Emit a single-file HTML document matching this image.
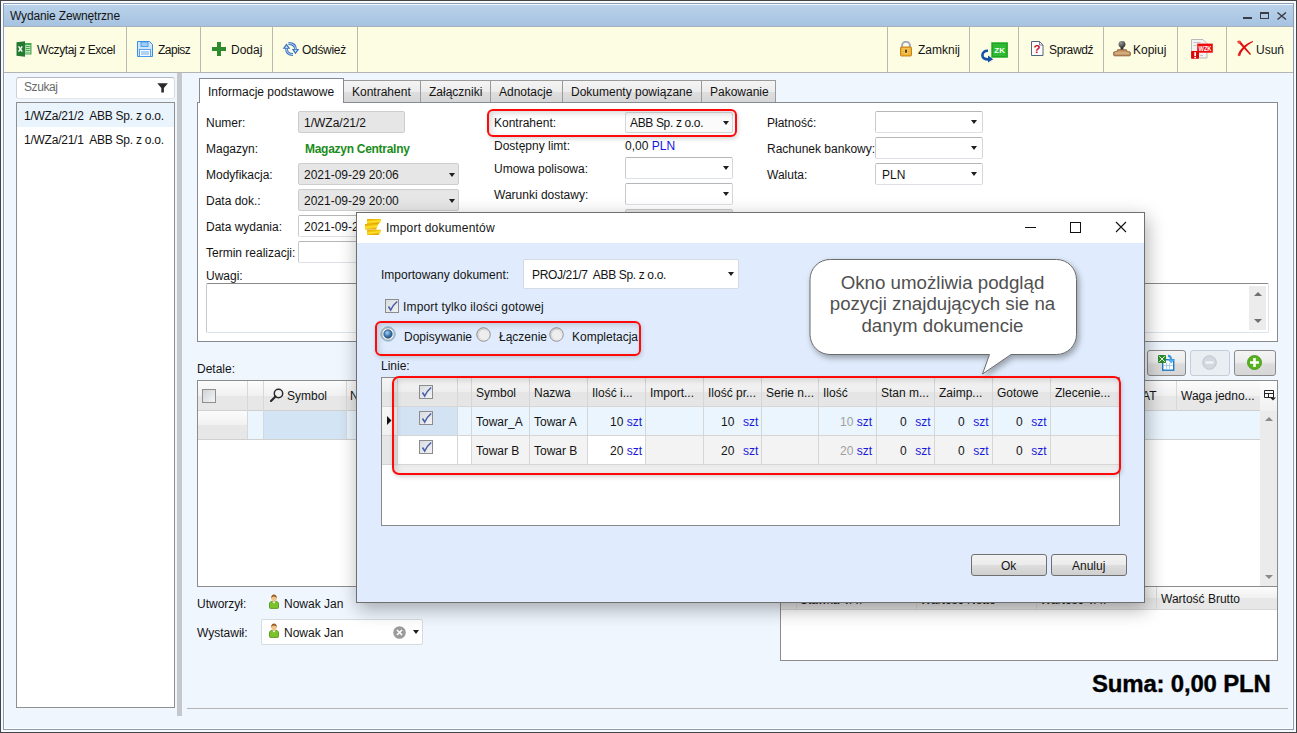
<!DOCTYPE html>
<html><head><meta charset="utf-8">
<style>
*{box-sizing:border-box;margin:0;padding:0}
html,body{width:1297px;height:733px;overflow:hidden;background:#fff}
body{position:relative;font-family:"Liberation Sans",sans-serif;font-size:12px;color:#141414}
.a{position:absolute}
.t{position:absolute;white-space:nowrap;line-height:16px;font-size:12px}
.box{position:absolute;border:1px solid;border-color:#b4b6ba #d4d6d9 #dde0e4 #c8cacd;border-radius:2px;background:#fff}
.gbox{position:absolute;border:1px solid #cdcdcd;border-radius:2px;background:#e6e6e6}
.dd{position:absolute;width:0;height:0;border-left:3.5px solid transparent;border-right:3.5px solid transparent;border-top:4px solid #1e1e1e}
.sep{position:absolute;top:27px;width:1px;height:45px;background:#b9b9b0}
</style></head><body>
<!-- window frame -->
<div class="a" style="left:0;top:0;width:1297px;height:733px;border:1px solid #454545;background:#f6f9fd"></div>
<div class="a" style="left:3px;top:3px;width:1291px;height:727px;border:1px solid #8b9cb4;background:#eff6fe;box-shadow:inset 1px 1px 0 #fbfdff,inset -1px -1px 0 #fbfdff"></div>
<!-- title bar -->
<div class="a" style="left:4px;top:4px;width:1289px;height:1px;background:#f4f8fd"></div>
<div class="a" style="left:4px;top:5px;width:1289px;height:21px;background:linear-gradient(#bad2ea,#a5c3e1)"></div>
<div class="t" style="left:10px;top:8px;letter-spacing:-0.15px">Wydanie Zewnętrzne</div>
<!-- window controls -->
<div class="a" style="left:1243px;top:17px;width:9px;height:2px;background:#3c3c46"></div>
<div class="a" style="left:1260px;top:12px;width:9px;height:7px;border:1px solid #3c3c46;border-top-width:2px"></div>
<svg class="a" style="left:1277px;top:12px" width="10" height="8" viewBox="0 0 10 8"><path d="M0.5 0.5L9 7.5M9 0.5L0.5 7.5" stroke="#3c3c46" stroke-width="1.4"/></svg>
<!-- toolbar -->
<div class="a" style="left:4px;top:26px;width:1289px;height:1px;background:#a9b1ba"></div>
<div class="a" style="left:4px;top:27px;width:1289px;height:45px;background:#fdfde3"></div>
<div class="a" style="left:4px;top:72px;width:1289px;height:1px;background:#b4b4b4"></div>
<div class="a" style="left:4px;top:27px;width:1px;height:45px;background:#f8fbff"></div>
<div class="sep" style="left:126px"></div>
<div class="sep" style="left:200px"></div>
<div class="sep" style="left:272px"></div>
<div class="sep" style="left:357px"></div>
<div class="sep" style="left:887px"></div>
<div class="sep" style="left:969px"></div>
<div class="sep" style="left:1018px"></div>
<div class="sep" style="left:1103px"></div>
<div class="sep" style="left:1177px"></div>
<div class="sep" style="left:1226px"></div>
<!-- toolbar icons/text -->
<svg class="a" style="left:16px;top:41px" width="16" height="16" viewBox="0 0 16 16"><rect x="8" y="2" width="7.5" height="11.5" fill="#48a84e"/><path d="M9.5 4.5h4.5M9.5 6.5h4.5M9.5 8.5h4.5M9.5 10.5h4.5M9.5 12h4.5" stroke="#cfe9cf" stroke-width="0.9"/><path d="M9.5 4v8.5M14 4v8.5" stroke="#bfe0bf" stroke-width="0.6"/><path d="M0.5 1.2L9 0.3v15.4L0.5 14.8z" fill="#237a30"/><path d="M2.6 5.3l3.6 5.4M6.2 5.3l-3.6 5.4" stroke="#fff" stroke-width="1.5"/></svg>
<div class="t" style="left:37px;top:42px;letter-spacing:-0.4px">Wczytaj z Excel</div>
<svg class="a" style="left:137px;top:41px" width="16" height="16" viewBox="0 0 16 16"><path d="M0.5 0.5h12l3 3v12h-15z" fill="#cfe6fb" stroke="#3a8ee6"/><rect x="4" y="1" width="7" height="4.5" fill="#9fcdf5" stroke="#3a8ee6" stroke-width="0.8"/><rect x="2.5" y="8.5" width="11" height="7" fill="#f4f9ff" stroke="#3a8ee6" stroke-width="0.8"/><path d="M4 11h8M4 13h8" stroke="#6aaef0"/></svg>
<div class="t" style="left:158px;top:42px;letter-spacing:-0.5px">Zapisz</div>
<svg class="a" style="left:212px;top:42px" width="14" height="14" viewBox="0 0 14 14"><path d="M5 0h4v5h5v4h-5v5h-4v-5h-5v-4h5z" fill="#2e8b2e"/></svg>
<div class="t" style="left:231px;top:42px">Dodaj</div>
<svg class="a" style="left:281px;top:41px" width="19" height="16" viewBox="0 0 19 16"><path d="M5.5 7.5Q5.5 13.5 12 13.5" fill="none" stroke="#3d6fc0" stroke-width="2.8"/><path d="M5.5 7.5Q5.5 13.5 12 13.5" fill="none" stroke="#b8dcf8" stroke-width="1"/><path d="M5.5 2.5L9.3 7.8H1.7z" fill="#3d6fc0"/><path d="M5.5 4.5L7 7H4z" fill="#c8e6fb"/><path d="M7.5 2.5Q14.5 2.5 14.5 8.5" fill="none" stroke="#3d6fc0" stroke-width="2.8"/><path d="M7.5 2.5Q14.5 2.5 14.5 8.5" fill="none" stroke="#b8dcf8" stroke-width="1"/><path d="M14.5 13.3L18.3 8H10.7z" fill="#3d6fc0"/><path d="M14.5 11.3L16 8.8H13z" fill="#c8e6fb"/></svg>
<div class="t" style="left:302px;top:42px;letter-spacing:-0.3px">Odśwież</div>
<svg class="a" style="left:900px;top:41px" width="12" height="16" viewBox="0 0 12 16"><path d="M2 6.5V4.8a4 4 0 0 1 8 0v1.7" fill="none" stroke="#a4acba" stroke-width="2.1"/><rect x="0.5" y="6" width="11" height="9" rx="1" fill="#eeac2c" stroke="#c27a12" stroke-width="0.9"/><rect x="1.8" y="7.3" width="8.4" height="6" fill="#f8d060"/><path d="M2 8.8h2.6M7.4 8.8h2.6M2 10.6h2.6M7.4 10.6h2.6M2 12.3h2.6M7.4 12.3h2.6" stroke="#dc9a20" stroke-width="0.7"/><rect x="5.1" y="8.6" width="1.8" height="3.2" fill="#4a3008"/></svg>
<div class="t" style="left:918px;top:42px">Zamknij</div>
<svg class="a" style="left:980px;top:41px" width="30" height="22" viewBox="0 0 30 22"><rect x="11.2" y="1.2" width="16.8" height="15.6" fill="#2fba33"/><rect x="12.5" y="2.5" width="14.2" height="13" fill="none" stroke="#27a02a" stroke-width="1"/><text x="19.6" y="11.9" font-family="Liberation Sans" font-weight="bold" font-size="8" fill="#f4fff4" text-anchor="middle">ZK</text><path d="M8 9.8C4.5 9.6 2.4 11.5 2.4 14.2C2.4 17 4.8 18.6 8.6 18.4" fill="none" stroke="#1450a8" stroke-width="2.6"/><path d="M8 14.6L13.2 18.2L8 21.4z" fill="#1450a8"/></svg>
<svg class="a" style="left:1031px;top:41px" width="13" height="15" viewBox="0 0 13 15"><path d="M0.5 0.5h8l3.5 3.5v10.5h-11.5z" fill="#fff" stroke="#54647e"/><path d="M8.5 0.5v3.5h3.5" fill="none" stroke="#54647e" stroke-width="0.8"/><text x="6" y="11.5" font-family="Liberation Sans" font-weight="bold" font-size="11.5" fill="#c8101c" text-anchor="middle">?</text></svg>
<div class="t" style="left:1049px;top:42px;letter-spacing:-0.35px">Sprawdź</div>
<svg class="a" style="left:1113px;top:40px" width="18" height="17" viewBox="0 0 18 17"><defs><radialGradient id="bh" cx="0.35" cy="0.3" r="0.8"><stop offset="0" stop-color="#9a9a9a"/><stop offset="1" stop-color="#2a2a2a"/></radialGradient></defs><rect x="7.6" y="5.5" width="2.8" height="5" fill="#333"/><circle cx="9" cy="4.3" r="3.4" fill="url(#bh)"/><path d="M4.5 9.8h9l0.6 2h2.4a0.8 0.8 0 0 1 0.8 0.8v2.4a0.8 0.8 0 0 1-0.8 0.8h-15a0.8 0.8 0 0 1-0.8-0.8v-2.4a0.8 0.8 0 0 1 0.8-0.8h2.4z" fill="#c89868" stroke="#86592e" stroke-width="0.9"/><path d="M2 13h14" stroke="#e2bf94" stroke-width="1"/></svg>
<div class="t" style="left:1133px;top:42px">Kopiuj</div>
<svg class="a" style="left:1190px;top:38px" width="24" height="22" viewBox="0 0 24 22"><path d="M1.5 1.5h11.5l4 4v14.5h-15.5z" fill="#f2f2f2" stroke="#b8b8b8"/><path d="M3.5 4.5h7M3.5 7.5h3M10 17.5h3" stroke="#c4c4c4" stroke-width="1.2"/><rect x="7.2" y="5.6" width="15.6" height="9.1" fill="#ee0a0a"/><text x="15" y="13" font-family="Liberation Sans" font-weight="bold" font-size="7" fill="#fff" text-anchor="middle" textLength="13" lengthAdjust="spacingAndGlyphs">WZK</text><rect x="1.1" y="12.9" width="7.9" height="7.8" rx="0.8" fill="#d80808"/><rect x="4.3" y="14.2" width="1.7" height="3.9" fill="#fff"/><rect x="4.3" y="18.9" width="1.7" height="1.3" fill="#fff"/></svg>
<svg class="a" style="left:1237px;top:40px" width="17" height="17" viewBox="0 0 17 17"><path d="M0.2 1.2L3 0.8L14 14L13 15z" fill="#e01010"/><path d="M16.2 0.8L15.6 2.2C12 4 9 6.5 6.5 9.5C4.5 12 3.4 14 3.2 15.6L0.8 15.2C1.5 12.5 3 10 5.5 7.5C8.5 4.5 12 2 16.2 0.8z" fill="#e01010"/><circle cx="2" cy="2" r="1.6" fill="#f04848"/><circle cx="2.1" cy="14.8" r="1.4" fill="#e83030"/></svg>
<div class="t" style="left:1256px;top:42px">Usuń</div>

<!-- left panel -->
<div class="box" style="left:16px;top:77px;width:159px;height:22px;border-color:#b4bac2 #d8dde2 #e2e6ea #ccd1d6;border-radius:3px"></div>
<div class="t" style="left:24px;top:79px;color:#6a6a6a;letter-spacing:-0.4px">Szukaj</div>
<svg class="a" style="left:157px;top:83px" width="12" height="10" viewBox="0 0 12 10"><path d="M0.3 0.3h10.6l-4 4.6v4.6h-2.6v-4.6z" fill="#2a2a2a"/></svg>
<div class="a" style="left:16px;top:102px;width:159px;height:606px;border:1px solid #8f8f8f;background:#fff"></div>
<div class="a" style="left:17px;top:103px;width:157px;height:24px;background:#eaf4fd"></div>
<div class="t" style="left:24px;top:108px;letter-spacing:-0.24px">1/WZa/21/2&nbsp; ABB Sp. z o.o.</div>
<div class="t" style="left:24px;top:132px;letter-spacing:-0.24px">1/WZa/21/1&nbsp; ABB Sp. z o.o.</div>
<div class="a" style="left:177px;top:73px;width:5px;height:643px;background:#c4c7cb"></div>
<div class="a" style="left:187px;top:708px;width:1101px;height:1px;background:#b4b4b4"></div>


<!-- tabs -->
<div class="a" style="left:343px;top:80px;width:78px;height:22px;border:1px solid #9a9a9a;border-bottom:none;background:linear-gradient(#f4f4f4 0%,#ececec 50%,#dedede 54%,#d6d6d6 100%)"></div>
<div class="a" style="left:420px;top:80px;width:71px;height:22px;border:1px solid #9a9a9a;border-bottom:none;background:linear-gradient(#f4f4f4 0%,#ececec 50%,#dedede 54%,#d6d6d6 100%)"></div>
<div class="a" style="left:490px;top:80px;width:73px;height:22px;border:1px solid #9a9a9a;border-bottom:none;background:linear-gradient(#f4f4f4 0%,#ececec 50%,#dedede 54%,#d6d6d6 100%)"></div>
<div class="a" style="left:562px;top:80px;width:140px;height:22px;border:1px solid #9a9a9a;border-bottom:none;background:linear-gradient(#f4f4f4 0%,#ececec 50%,#dedede 54%,#d6d6d6 100%)"></div>
<div class="a" style="left:701px;top:80px;width:75px;height:22px;border:1px solid #9a9a9a;border-bottom:none;background:linear-gradient(#f4f4f4 0%,#ececec 50%,#dedede 54%,#d6d6d6 100%)"></div>
<div class="t" style="left:352px;top:84px">Kontrahent</div>
<div class="t" style="left:429px;top:84px">Załączniki</div>
<div class="t" style="left:499px;top:84px">Adnotacje</div>
<div class="t" style="left:571px;top:84px">Dokumenty powiązane</div>
<div class="t" style="left:710px;top:84px">Pakowanie</div>
<!-- content panel -->
<div class="a" style="left:197px;top:102px;width:1081px;height:240px;border:1px solid #858a94;background:#fff"></div>
<div class="a" style="left:199px;top:78px;width:145px;height:25px;border:1px solid #858a94;border-bottom:none;background:#fff"></div>
<div class="t" style="left:208px;top:84px">Informacje podstawowe</div>
<!-- form col 1 -->
<div class="t" style="left:206px;top:115px">Numer:</div>
<div class="t" style="left:206px;top:141px">Magazyn:</div>
<div class="t" style="left:206px;top:167px">Modyfikacja:</div>
<div class="t" style="left:206px;top:193px">Data dok.:</div>
<div class="t" style="left:206px;top:219px">Data wydania:</div>
<div class="t" style="left:206px;top:245px">Termin realizacji:</div>
<div class="t" style="left:206px;top:268px">Uwagi:</div>
<div class="gbox" style="left:298px;top:111px;width:107px;height:22px"></div>
<div class="t" style="left:304px;top:115px">1/WZa/21/2</div>
<div class="t" style="left:305px;top:141px;color:#1a8c1a;font-weight:bold;letter-spacing:-0.28px">Magazyn Centralny</div>
<div class="gbox" style="left:298px;top:163px;width:161px;height:22px"></div>
<div class="t" style="left:304px;top:167px">2021-09-29 20:06</div>
<div class="dd" style="left:449px;top:173px"></div>
<div class="gbox" style="left:298px;top:189px;width:161px;height:22px"></div>
<div class="t" style="left:304px;top:193px">2021-09-29 20:00</div>
<div class="dd" style="left:449px;top:199px"></div>
<div class="box" style="left:298px;top:215px;width:161px;height:22px"></div>
<div class="t" style="left:304px;top:219px">2021-09-29 20:00</div>
<div class="box" style="left:298px;top:241px;width:161px;height:22px"></div>
<div class="box" style="left:206px;top:283px;width:1063px;height:50px;border-color:#8a8a8a #dde3ea #dde3ea #c8c8c8"></div>
<div class="a" style="left:1249px;top:286px;width:17px;height:44px;background:#ececec"></div>
<div class="a" style="left:1254px;top:292px;width:0;height:0;border-left:4px solid transparent;border-right:4px solid transparent;border-bottom:4px solid #707070"></div>
<div class="a" style="left:1254px;top:319px;width:0;height:0;border-left:4px solid transparent;border-right:4px solid transparent;border-top:4px solid #707070"></div>
<!-- form col 2 -->
<div class="t" style="left:494px;top:115px">Kontrahent:</div>
<div class="box" style="left:625px;top:112px;width:108px;height:21px;border-color:#d8d8d8;background:#fbfbfb"></div>
<div class="t" style="left:630px;top:115px;letter-spacing:-0.35px">ABB Sp. z o.o.</div>
<div class="dd" style="left:723px;top:121px"></div>
<div class="t" style="left:494px;top:138px">Dostępny limt:</div>
<div class="t" style="left:625px;top:138px">0,00 <span style="color:#1414e6">PLN</span></div>
<div class="t" style="left:494px;top:161px">Umowa polisowa:</div>
<div class="box" style="left:625px;top:157px;width:108px;height:22px"></div>
<div class="dd" style="left:723px;top:166px"></div>
<div class="t" style="left:494px;top:187px">Warunki dostawy:</div>
<div class="box" style="left:625px;top:183px;width:108px;height:22px"></div>
<div class="dd" style="left:723px;top:192px"></div>
<div class="gbox" style="left:625px;top:209px;width:108px;height:22px"></div>
<!-- form col 3 -->
<div class="t" style="left:767px;top:115px">Płatność:</div>
<div class="box" style="left:875px;top:111px;width:108px;height:22px"></div>
<div class="dd" style="left:971px;top:120px"></div>
<div class="t" style="left:767px;top:141px">Rachunek bankowy:</div>
<div class="box" style="left:875px;top:137px;width:108px;height:22px"></div>
<div class="dd" style="left:971px;top:146px"></div>
<div class="t" style="left:767px;top:167px">Waluta:</div>
<div class="box" style="left:875px;top:163px;width:108px;height:22px"></div>
<div class="t" style="left:882px;top:167px">PLN</div>
<div class="dd" style="left:971px;top:172px"></div>


<!-- details -->
<div class="t" style="left:197px;top:361px">Detale:</div>
<div class="a" style="left:1147px;top:350px;width:39px;height:26px;border:1px solid #8a8a8a;border-radius:3px;background:linear-gradient(#f4f4f4 0%,#ececec 45%,#dcdcdc 55%,#d6d6d6 100%)"></div>
<svg class="a" style="left:1157px;top:354px" width="19" height="17" viewBox="0 0 19 17"><rect x="5.7" y="5.7" width="11" height="10.5" fill="#fff" stroke="#1a7cc4" stroke-width="1.4"/><path d="M6.5 11.5h9.5M9.5 9v6.5M12.5 9v6.5" stroke="#a4c8e6" stroke-width="0.9"/><rect x="1" y="1" width="8" height="8" rx="0.8" fill="#2e8a2e"/><path d="M2.2 2.2l5.6 5.6M7.8 2.2l-5.6 5.6" stroke="#fff" stroke-width="0.9"/><path d="M11 1.8Q14.2 1.8 14 5.8" fill="none" stroke="#3a9be0" stroke-width="2.2"/><path d="M10.6 5.6h7l-3.5 4z" fill="#56aeec"/></svg>
<div class="a" style="left:1190px;top:350px;width:40px;height:26px;border:1px solid #c6cdd5;border-radius:3px;background:#e9eef3"></div>
<svg class="a" style="left:1202px;top:355px" width="15" height="15" viewBox="0 0 15 15"><circle cx="7.5" cy="7.5" r="6.8" fill="#d3d8de" stroke="#bfc6ce"/><rect x="3.5" y="6.3" width="8" height="2.4" fill="#f2f4f6"/></svg>
<div class="a" style="left:1234px;top:350px;width:42px;height:26px;border:1px solid #8a8a8a;border-radius:3px;background:linear-gradient(#f4f4f4 0%,#ececec 45%,#dcdcdc 55%,#d6d6d6 100%)"></div>
<svg class="a" style="left:1247px;top:355px" width="15" height="15" viewBox="0 0 15 15"><circle cx="7.5" cy="7.5" r="7" fill="#58b21e"/><circle cx="7.5" cy="7.5" r="7" fill="none" stroke="#3f8f10" stroke-width="0.8"/><path d="M6.2 3h2.6v3.2h3.2v2.6h-3.2v3.2h-2.6v-3.2h-3.2v-2.6h3.2z" fill="#fff"/></svg>
<div class="a" style="left:197px;top:380px;width:1081px;height:207px;border:1px solid #8c8c8c;background:#fff"></div>
<div class="a" style="left:198px;top:381px;width:1062px;height:30px;background:linear-gradient(#fcfcfc 0%,#f1f1f1 50%,#e7e7e7 52%,#e7e7e7 100%);border-bottom:1px solid #d0d0d0"></div>
<div class="a" style="left:1260px;top:381px;width:17px;height:30px;background:linear-gradient(#fefefe,#f0f0f0)"></div>
<div class="a" style="left:247px;top:381px;width:1px;height:58px;background:#d8d8d8"></div>
<div class="a" style="left:263px;top:381px;width:1px;height:58px;background:#d8d8d8"></div>
<div class="a" style="left:346px;top:381px;width:1px;height:58px;background:#d8d8d8"></div>
<div class="a" style="left:1176px;top:381px;width:1px;height:58px;background:#d8d8d8"></div>
<div class="a" style="left:198px;top:411px;width:49px;height:28px;background:linear-gradient(#fcfcfc 0%,#f1f1f1 50%,#e7e7e7 52%,#e7e7e7 100%)"></div>
<div class="a" style="left:248px;top:411px;width:15px;height:28px;background:#eaf5fe"></div>
<div class="a" style="left:264px;top:411px;width:82px;height:28px;background:#d3e4f5"></div>
<div class="a" style="left:347px;top:411px;width:913px;height:28px;background:#eaf5fe"></div>
<div class="a" style="left:198px;top:439px;width:1062px;height:1px;background:#d0d0d0"></div>
<div class="a" style="left:202px;top:389px;width:14px;height:14px;border:1px solid #8e8f8f;background:linear-gradient(135deg,#d0d3d8,#f4f4f4)"></div>
<svg class="a" style="left:270px;top:388px" width="14" height="14" viewBox="0 0 14 14"><circle cx="8.5" cy="5.5" r="4.2" fill="none" stroke="#2a2a2a" stroke-width="1.5"/><path d="M5.5 8.5L1 13" stroke="#2a2a2a" stroke-width="2.2" stroke-linecap="round"/></svg>
<div class="t" style="left:287px;top:388px">Symbol</div>
<div class="t" style="left:1135px;top:388px">VAT</div>
<div class="t" style="left:1181px;top:388px">Waga jedno...</div>
<svg class="a" style="left:1264px;top:390px" width="12" height="11" viewBox="0 0 12 11"><path d="M0.5 0.5h9v7h-9zM0.5 3.5h9M4.5 3.5v4" fill="none" stroke="#222" stroke-width="1"/><path d="M6 7.5h6l-3 3z" fill="#222"/></svg>
<div class="a" style="left:1260px;top:411px;width:17px;height:175px;background:#ebebeb"></div>
<div class="a" style="left:1265px;top:417px;width:0;height:0;border-left:4px solid transparent;border-right:4px solid transparent;border-bottom:4px solid #8a8a8a"></div>
<div class="a" style="left:1265px;top:575px;width:0;height:0;border-left:4px solid transparent;border-right:4px solid transparent;border-top:4px solid #8a8a8a"></div>
<!-- bottom left -->
<div class="t" style="left:197px;top:596px">Utworzył:</div>
<svg class="a" style="left:269px;top:594px" width="10" height="15" viewBox="0 0 10 15"><path d="M0.5 13.6v-3.6c0-1.6 1-2.6 2.6-2.6h3.8c1.6 0 2.6 1 2.6 2.6v3.6a0.8 0.8 0 0 1-0.8 0.8h-7.4a0.8 0.8 0 0 1-0.8-0.8z" fill="#7cc22a" stroke="#4e8c12" stroke-width="0.8"/><path d="M3.3 7.4l1.7 2.2 1.7-2.2z" fill="#fff"/><ellipse cx="5" cy="4.3" rx="2.7" ry="3.3" fill="#efc58c"/><path d="M2.2 4.6c-0.2-3 1.2-4.2 2.8-4.2s3 1.2 2.8 4.2c-0.5-1.3-1.5-2-2.8-2s-2.3 0.7-2.8 2z" fill="#9a5a24"/></svg>
<div class="t" style="left:284px;top:596px">Nowak Jan</div>
<div class="t" style="left:197px;top:625px">Wystawił:</div>
<div class="box" style="left:261px;top:619px;width:162px;height:26px;border-color:#d6dbe0"></div>
<svg class="a" style="left:269px;top:623px" width="10" height="15" viewBox="0 0 10 15"><path d="M0.5 13.6v-3.6c0-1.6 1-2.6 2.6-2.6h3.8c1.6 0 2.6 1 2.6 2.6v3.6a0.8 0.8 0 0 1-0.8 0.8h-7.4a0.8 0.8 0 0 1-0.8-0.8z" fill="#7cc22a" stroke="#4e8c12" stroke-width="0.8"/><path d="M3.3 7.4l1.7 2.2 1.7-2.2z" fill="#fff"/><ellipse cx="5" cy="4.3" rx="2.7" ry="3.3" fill="#efc58c"/><path d="M2.2 4.6c-0.2-3 1.2-4.2 2.8-4.2s3 1.2 2.8 4.2c-0.5-1.3-1.5-2-2.8-2s-2.3 0.7-2.8 2z" fill="#9a5a24"/></svg>
<div class="t" style="left:284px;top:625px">Nowak Jan</div>
<svg class="a" style="left:393px;top:626px" width="13" height="13" viewBox="0 0 13 13"><circle cx="6.5" cy="6.5" r="6.3" fill="#9c9c9c"/><path d="M4 4l5 5M9 4l-5 5" stroke="#fff" stroke-width="1.6"/></svg>
<div class="dd" style="left:413px;top:630px"></div>
<!-- summary grid -->
<div class="a" style="left:780px;top:586px;width:498px;height:75px;border:1px solid #8c8c8c;background:#fff"></div>
<div class="a" style="left:781px;top:587px;width:496px;height:23px;background:linear-gradient(#fcfcfc 0%,#f1f1f1 50%,#e7e7e7 52%,#e7e7e7 100%);border-bottom:1px solid #d8d8d8"></div>
<div class="a" style="left:796px;top:587px;width:1px;height:22px;background:#d8d8d8"></div>
<div class="a" style="left:916px;top:587px;width:1px;height:22px;background:#d8d8d8"></div>
<div class="a" style="left:1036px;top:587px;width:1px;height:22px;background:#d8d8d8"></div>
<div class="a" style="left:1156px;top:587px;width:1px;height:22px;background:#d8d8d8"></div>
<div class="t" style="left:1161px;top:591px">Wartość Brutto</div>
<div class="t" style="left:1092px;top:670px;font-size:24px;line-height:28px;font-weight:bold;color:#000;letter-spacing:-0.2px;-webkit-text-stroke:0.35px #000">Suma: 0,00 PLN</div>


<div class="t" style="left:800px;top:592px">Stawka VAT</div>
<div class="t" style="left:920px;top:592px">Wartość Netto</div>
<div class="t" style="left:1040px;top:592px">Wartość VAT</div>
<div class="t" style="left:350px;top:388px">Nazwa</div>
<!-- dialog -->
<div class="a" style="left:356px;top:212px;width:789px;height:391px;box-shadow:2px 6px 18px rgba(0,0,0,0.32)"></div>
<div class="a" style="left:356px;top:212px;width:789px;height:391px;border:1px solid #6f6f6f;background:#e0ecfd"></div>
<div class="a" style="left:357px;top:213px;width:787px;height:30px;background:#fff"></div>
<svg class="a" style="left:364px;top:218px" width="18" height="18" viewBox="0 0 18 18"><defs><linearGradient id="cg" x1="0" y1="0" x2="0.3" y2="1"><stop offset="0" stop-color="#e6a000"/><stop offset="0.45" stop-color="#f5d010"/><stop offset="0.6" stop-color="#ffe830"/><stop offset="1" stop-color="#e8a400"/></linearGradient></defs><path d="M3 1h14v2l-2.5 3h-11.5z" fill="url(#cg)"/><path d="M1 6h13.5l-2.5 5.6h-11z" fill="url(#cg)"/><path d="M3 11.8h14v1.8l-2.5 3.4h-11.5z" fill="url(#cg)"/></svg>
<div class="t" style="left:386px;top:220px;letter-spacing:0.2px">Import dokumentów</div>
<svg class="a" style="left:1025px;top:227px" width="11" height="2" viewBox="0 0 11 2"><rect width="11" height="1" fill="#111"/></svg>
<div class="a" style="left:1070px;top:222px;width:11px;height:11px;border:1px solid #111"></div>
<svg class="a" style="left:1115px;top:221px" width="12" height="12" viewBox="0 0 12 12"><path d="M1 1L11 11M11 1L1 11" stroke="#111" stroke-width="1.1"/></svg>
<div class="t" style="left:381px;top:267px">Importowany dokument:</div>
<div class="box" style="left:523px;top:259px;width:216px;height:30px;border-color:#d3dae2"></div>
<div class="t" style="left:532px;top:267px;letter-spacing:-0.35px">PROJ/21/7&nbsp; ABB Sp. z o.o.</div>
<div class="dd" style="left:728px;top:272px"></div>
<div class="a" style="left:385px;top:299px;width:14px;height:14px;border:1px solid #8c8c8c;background:linear-gradient(135deg,#d8dce2,#f2f2f2)"></div>
<svg class="a" style="left:386px;top:300px" width="12" height="12" viewBox="0 0 12 12"><path d="M2.5 6.5l2.2 3.5c1.5-3.5 3.5-6 6.5-8.5" fill="none" stroke="#4b5fa8" stroke-width="1.6"/></svg>
<div class="t" style="left:403px;top:299px;letter-spacing:0.15px">Import tylko ilości gotowej</div>
<!-- radios -->
<svg class="a" style="left:380px;top:326px" width="16" height="16" viewBox="0 0 16 16"><defs><radialGradient id="rg" cx="0.4" cy="0.35" r="0.7"><stop offset="0" stop-color="#a8d0f0"/><stop offset="0.6" stop-color="#3a78b0"/><stop offset="1" stop-color="#1c4a80"/></radialGradient></defs><circle cx="8" cy="8" r="7.3" fill="#f4f4f4" stroke="#7ec4ea" stroke-width="1"/><circle cx="8" cy="8" r="6.3" fill="#f8f8f8" stroke="#8a8a8a" stroke-width="0.9"/><circle cx="8" cy="8" r="4.2" fill="url(#rg)" stroke="#1c4a82" stroke-width="0.7"/></svg>
<div class="t" style="left:404px;top:329px">Dopisywanie</div>
<svg class="a" style="left:476px;top:327px" width="15" height="15" viewBox="0 0 15 15"><defs><linearGradient id="rg2" x1="0" y1="0" x2="1" y2="1"><stop offset="0" stop-color="#c8c8c8"/><stop offset="1" stop-color="#f8f8f8"/></linearGradient></defs><circle cx="7.5" cy="7.5" r="6.8" fill="url(#rg2)" stroke="#8c8c8c" stroke-width="0.9"/><circle cx="7.5" cy="7.5" r="4.5" fill="#eeeeee"/></svg>
<div class="t" style="left:499px;top:329px">Łączenie</div>
<svg class="a" style="left:549px;top:327px" width="15" height="15" viewBox="0 0 15 15"><circle cx="7.5" cy="7.5" r="6.8" fill="url(#rg2)" stroke="#8c8c8c" stroke-width="0.9"/><circle cx="7.5" cy="7.5" r="4.5" fill="#eeeeee"/></svg>
<div class="t" style="left:572px;top:329px">Kompletacja</div>
<div class="t" style="left:381px;top:358px">Linie:</div>
<!-- import table -->
<div class="a" style="left:381px;top:377px;width:739px;height:149px;border:1px solid #8a8a8a;background:#fff"></div>
<div class="a" style="left:382px;top:378px;width:737px;height:28px;background:linear-gradient(#f5f5f5 0%,#eeeeee 50%,#e4e4e4 52%,#e6e6e6 100%)"></div>
<div class="a" style="left:382px;top:406px;width:15px;height:58px;background:linear-gradient(#f8f8f8 0%,#f0f0f0 50%,#e6e6e6 52%,#e6e6e6 100%)"></div>
<div class="a" style="left:398px;top:406px;width:59px;height:29px;background:#d3e3f4"></div>
<div class="a" style="left:458px;top:406px;width:661px;height:29px;background:#eaf5fe"></div>
<div class="a" style="left:398px;top:436px;width:73px;height:28px;background:#fff"></div>
<div class="a" style="left:472px;top:436px;width:647px;height:28px;background:#f3f3f3"></div>
<div class="a" style="left:588px;top:436px;width:57px;height:28px;background:#fff"></div>
<div class="a" style="left:382px;top:435px;width:737px;height:1px;background:#d6d6d6"></div>
<div class="a" style="left:382px;top:464px;width:737px;height:1px;background:#d6d6d6"></div>
<div class="a" style="left:382px;top:406px;width:737px;height:1px;background:#d6d6d6"></div>
<div class="a" style="left:397px;top:378px;width:1px;height:86px;background:#d6d6d6"></div>
<div class="a" style="left:457px;top:378px;width:1px;height:86px;background:#d6d6d6"></div>
<div class="a" style="left:471px;top:378px;width:1px;height:86px;background:#d6d6d6"></div>
<div class="a" style="left:529px;top:378px;width:1px;height:86px;background:#d6d6d6"></div>
<div class="a" style="left:587px;top:378px;width:1px;height:86px;background:#d6d6d6"></div>
<div class="a" style="left:645px;top:378px;width:1px;height:86px;background:#d6d6d6"></div>
<div class="a" style="left:703px;top:378px;width:1px;height:86px;background:#d6d6d6"></div>
<div class="a" style="left:761px;top:378px;width:1px;height:86px;background:#d6d6d6"></div>
<div class="a" style="left:818px;top:378px;width:1px;height:86px;background:#d6d6d6"></div>
<div class="a" style="left:876px;top:378px;width:1px;height:86px;background:#d6d6d6"></div>
<div class="a" style="left:934px;top:378px;width:1px;height:86px;background:#d6d6d6"></div>
<div class="a" style="left:992px;top:378px;width:1px;height:86px;background:#d6d6d6"></div>
<div class="a" style="left:1050px;top:378px;width:1px;height:86px;background:#d6d6d6"></div>

<svg class="a" style="left:387px;top:416px" width="5" height="9" viewBox="0 0 5 9"><path d="M0 0l4.5 4.5L0 9z" fill="#111"/></svg>
<div class="a" style="left:419px;top:385px;width:14px;height:14px;border:1px solid #8c8c8c;background:linear-gradient(135deg,#d8dce2,#f2f2f2)"></div>
<svg class="a" style="left:420px;top:386px" width="12" height="12" viewBox="0 0 12 12"><path d="M2.5 6.5l2.2 3.5c1.5-3.5 3.5-6 6.5-8.5" fill="none" stroke="#4b5fa8" stroke-width="1.6"/></svg>
<div class="a" style="left:419px;top:411px;width:14px;height:14px;border:1px solid #8c8c8c;background:linear-gradient(135deg,#d8dce2,#f2f2f2)"></div>
<svg class="a" style="left:420px;top:412px" width="12" height="12" viewBox="0 0 12 12"><path d="M2.5 6.5l2.2 3.5c1.5-3.5 3.5-6 6.5-8.5" fill="none" stroke="#4b5fa8" stroke-width="1.6"/></svg>
<div class="a" style="left:419px;top:440px;width:14px;height:14px;border:1px solid #8c8c8c;background:linear-gradient(135deg,#d8dce2,#f2f2f2)"></div>
<svg class="a" style="left:420px;top:441px" width="12" height="12" viewBox="0 0 12 12"><path d="M2.5 6.5l2.2 3.5c1.5-3.5 3.5-6 6.5-8.5" fill="none" stroke="#4b5fa8" stroke-width="1.6"/></svg>
<div class="t" style="left:476px;top:385px">Symbol</div>
<div class="t" style="left:534px;top:385px">Nazwa</div>
<div class="t" style="left:592px;top:385px">Ilość i...</div>
<div class="t" style="left:650px;top:385px">Import...</div>
<div class="t" style="left:708px;top:385px">Ilość pr...</div>
<div class="t" style="left:766px;top:385px">Serie n...</div>
<div class="t" style="left:823px;top:385px">Ilość</div>
<div class="t" style="left:881px;top:385px">Stan m...</div>
<div class="t" style="left:939px;top:385px">Zaimp...</div>
<div class="t" style="left:997px;top:385px">Gotowe</div>
<div class="t" style="left:1055px;top:385px">Zlecenie...</div>
<div class="t" style="left:476px;top:414px">Towar_A</div>
<div class="t" style="left:534px;top:414px">Towar A</div>
<div class="t" style="left:610px;top:414px">10 <span style="color:#1818d8">szt</span></div>
<div class="t" style="left:721px;top:414px">10&nbsp; <span style="color:#1818d8;margin-left:2px">szt</span></div>
<div class="t" style="left:840px;top:414px"><span style="color:#a0a0a0">10</span> <span style="color:#1818d8">szt</span></div>
<div class="t" style="left:900px;top:414px">0&nbsp; <span style="color:#1818d8;margin-left:2px">szt</span></div>
<div class="t" style="left:958px;top:414px">0&nbsp; <span style="color:#1818d8;margin-left:2px">szt</span></div>
<div class="t" style="left:1016px;top:414px">0&nbsp; <span style="color:#1818d8;margin-left:2px">szt</span></div>
<div class="t" style="left:476px;top:443px">Towar B</div>
<div class="t" style="left:534px;top:443px">Towar B</div>
<div class="t" style="left:610px;top:443px">20 <span style="color:#1818d8">szt</span></div>
<div class="t" style="left:721px;top:443px">20&nbsp; <span style="color:#1818d8;margin-left:2px">szt</span></div>
<div class="t" style="left:840px;top:443px"><span style="color:#a0a0a0">20</span> <span style="color:#1818d8">szt</span></div>
<div class="t" style="left:900px;top:443px">0&nbsp; <span style="color:#1818d8;margin-left:2px">szt</span></div>
<div class="t" style="left:958px;top:443px">0&nbsp; <span style="color:#1818d8;margin-left:2px">szt</span></div>
<div class="t" style="left:1016px;top:443px">0&nbsp; <span style="color:#1818d8;margin-left:2px">szt</span></div>

<div class="a" style="left:394px;top:465px;width:725px;height:9px;background:linear-gradient(#e9e9e9,#f6f6f6)"></div>
<!-- buttons -->
<div class="a" style="left:971px;top:554px;width:76px;height:22px;border:1px solid #707070;border-radius:3px;background:linear-gradient(#f2f2f2 0%,#ebebeb 50%,#dddddd 51%,#cfcfcf 100%)"></div>
<div class="t" style="left:1001px;top:558px">Ok</div>
<div class="a" style="left:1051px;top:554px;width:76px;height:22px;border:1px solid #707070;border-radius:3px;background:linear-gradient(#f2f2f2 0%,#ebebeb 50%,#dddddd 51%,#cfcfcf 100%)"></div>
<div class="t" style="left:1072px;top:558px">Anuluj</div>
<!-- callout -->
<svg class="a" style="left:800px;top:250px" width="300" height="140" viewBox="0 0 300 140"><defs><filter id="sh" x="-10%" y="-10%" width="130%" height="140%"><feGaussianBlur in="SourceAlpha" stdDeviation="3"/><feOffset dx="2" dy="3"/><feComponentTransfer><feFuncA type="linear" slope="0.35"/></feComponentTransfer><feMerge><feMergeNode/><feMergeNode in="SourceGraphic"/></feMerge></filter></defs><path d="M30.5 9.5h226a20 20 0 0 1 20 20v55a20 20 0 0 1-20 20h-45.5l-28.5 19.5 7-19.5h-159.5a20 20 0 0 1-20-20v-55a20 20 0 0 1 20-20z" fill="#fff" stroke="#6a6a6a" stroke-width="1" filter="url(#sh)"/></svg>
<div class="a" style="left:809px;top:272px;width:267px;text-align:center;font-size:18.7px;line-height:21.3px;color:#505050">Okno umożliwia podgląd<br>pozycji znajdujących sie na<br>danym dokumencie</div>
<!-- red annotations -->
<div class="a" style="left:487px;top:109px;width:250px;height:28px;border:2px solid #ff0a0a;border-radius:6px;box-shadow:1px 2px 4px rgba(0,0,0,0.16), inset 2px 2px 6px rgba(0,0,0,0.16)"></div>
<div class="a" style="left:375px;top:321px;width:266px;height:35px;border:2px solid #ff0a0a;border-radius:6px;box-shadow:1px 2px 4px rgba(0,0,0,0.16), inset 2px 2px 6px rgba(0,0,0,0.16)"></div>
<div class="a" style="left:392px;top:376px;width:729px;height:99px;border:2px solid #ff0a0a;border-radius:7px;box-shadow:1px 2px 4px rgba(0,0,0,0.16), inset 2px 2px 6px rgba(0,0,0,0.16)"></div>

</body></html>
